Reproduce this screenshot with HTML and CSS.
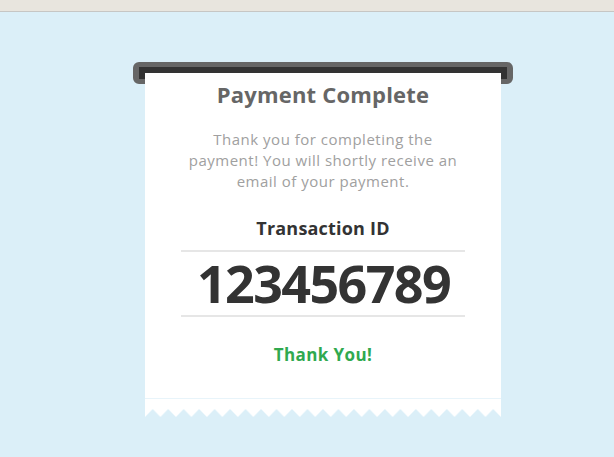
FILE: index.html
```html
<!DOCTYPE html>
<html lang="en">
<head>
<meta charset="utf-8">
<title>Payment Complete</title>
<link rel="stylesheet" href="styles.css">
</head>
<body>
<div class="topbar"></div>
<main class="stage">
  <div class="printer">
    <div class="slot"></div>
    <div class="receipt">
      <div class="paper">
        <h1 class="title">Payment Complete</h1>
        <p class="message">Thank you for completing the<br>payment! You will shortly receive an<br>email of your payment.</p>
        <h2 class="label">Transaction ID</h2>
        <div class="txid">123456789</div>
        <div class="thanks">Thank You!</div>
      </div>
      <svg class="tear" width="356" height="19" viewBox="0 0 356 19" aria-hidden="true">
        <defs>
          <pattern id="zig" patternUnits="userSpaceOnUse" width="15.478" height="19">
            <polygon points="0,0 15.478,0 15.478,19 7.739,11 0,19" fill="#ffffff"/>
          </pattern>
        </defs>
        <rect x="0" y="0" width="356" height="19" fill="url(#zig)"/>
        <rect x="0" y="0" width="356" height="1" fill="#e8f4fa"/>
      </svg>
    </div>
  </div>
</main>
</body>
</html>
```

FILE: styles.css
```css
html, body {
  margin: 0;
  padding: 0;
}
body {
  background: #dbeff8;
  font-family: "Open Sans", "DejaVu Sans", sans-serif;
  width: 614px;
  height: 457px;
  overflow: hidden;
}
.topbar {
  height: 11px;
  background: #e8e5de;
  border-bottom: 1px solid #c6c6c4;
}
.stage {
  padding: 50px 0 0 133px;
}
.printer {
  width: 380px;
}
.slot {
  box-sizing: border-box;
  height: 22px;
  width: 380px;
  background: #333333;
  border: 5px solid #666666;
  border-left-width: 6px;
  border-right-width: 6px;
  border-radius: 6px;
}
.receipt {
  width: 356px;
  margin: -11px 0 0 12px;
}
.paper {
  background: #ffffff;
  padding: 6px 0 31px;
  text-align: center;
}
.title {
  margin: 0;
  font-size: 22px;
  line-height: 30px;
  font-weight: 700;
  color: #666666;
  letter-spacing: 0.2px;
}
.message {
  margin: 20px 0 0;
  font-size: 15px;
  line-height: 21px;
  color: #a0a0a0;
  letter-spacing: 0.5px;
}
.label {
  margin: 24px 0 0;
  font-size: 18px;
  line-height: 24px;
  font-weight: 700;
  color: #333333;
  letter-spacing: 0.2px;
}
.txid {
  margin: 10px 36px 0;
  border-top: 2px solid #e6e6e6;
  border-bottom: 2px solid #e6e6e6;
  font-size: 52px;
  line-height: 62px;
  font-weight: 700;
  color: #333333;
  letter-spacing: -1.6px;
  text-indent: 1px;
  padding-bottom: 1px;
}
.thanks {
  margin-top: 26px;
  font-size: 17px;
  line-height: 24px;
  font-weight: 700;
  color: #30a94f;
  letter-spacing: 0.4px;
}
.tear {
  display: block;
}
```
